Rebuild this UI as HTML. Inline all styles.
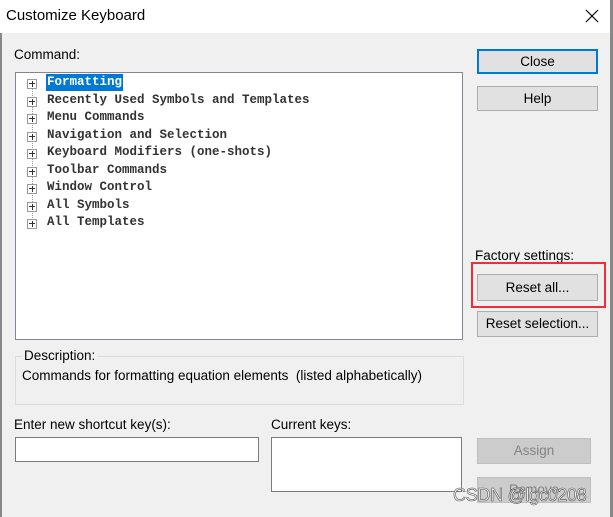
<!DOCTYPE html>
<html><head><style>
*{margin:0;padding:0;box-sizing:border-box}
body{width:613px;height:517px;background:#f0f0f0;position:relative;overflow:hidden;font-family:"Liberation Sans",sans-serif;font-size:13.5px;color:#000}
.a{position:absolute}
.title{left:0;top:0;width:613px;height:33px;background:#fff}
.btn{position:absolute;background:#e1e1e1;border:1px solid #adadad;text-align:center;font-size:13.5px}
.lbl{position:absolute;font-size:13.5px;white-space:nowrap}
.tree div{position:absolute;left:0;height:17px;font-family:"Liberation Mono",monospace;font-size:12.5px;font-weight:bold;color:#333;white-space:nowrap;line-height:17px}
.pl{position:absolute;width:10px;height:10px;border:1px solid #999;background:#fff}
.pl:before{content:"";position:absolute;left:1px;top:3px;width:6px;height:1px;background:#333}
.pl:after{content:"";position:absolute;left:3.5px;top:0.5px;width:1px;height:6px;background:#333}
</style></head><body>
<div class="a title"></div>
<div class="a" style="left:0;top:33px;width:2px;height:484px;background:#888"></div>
<div class="a" style="left:610px;top:0;width:3px;height:517px;background:#888"></div>
<div class="lbl" style="left:6px;top:7px;font-size:15px">Customize Keyboard</div>
<svg class="a" style="left:585px;top:9px" width="14" height="14"><path d="M1 1L13 13M13 1L1 13" stroke="#000" stroke-width="1.2"/></svg>
<div class="lbl" style="left:14px;top:47px">Command:</div>
<div class="a" style="left:15px;top:72px;width:448px;height:268px;background:#fff;border:1px solid #828790"></div>
<div class="a" style="left:32px;top:88px;width:0;height:140px;border-left:1px dotted #999"></div>
<div class="tree a" style="left:0;top:0">
<div style="top:74px;left:46px;background:#0078d7;color:#fff;padding:0 1px">Formatting</div>
<div style="top:92px;left:47px">Recently Used Symbols and Templates</div>
<div style="top:109px;left:47px">Menu Commands</div>
<div style="top:127px;left:47px">Navigation and Selection</div>
<div style="top:144px;left:47px">Keyboard Modifiers (one-shots)</div>
<div style="top:162px;left:47px">Toolbar Commands</div>
<div style="top:179px;left:47px">Window Control</div>
<div style="top:197px;left:47px">All Symbols</div>
<div style="top:214px;left:47px">All Templates</div>
</div>
<div class="pl" style="left:27px;top:79px"></div>
<div class="pl" style="left:27px;top:97px"></div>
<div class="pl" style="left:27px;top:114px"></div>
<div class="pl" style="left:27px;top:132px"></div>
<div class="pl" style="left:27px;top:149px"></div>
<div class="pl" style="left:27px;top:167px"></div>
<div class="pl" style="left:27px;top:184px"></div>
<div class="pl" style="left:27px;top:202px"></div>
<div class="pl" style="left:27px;top:219px"></div>
<div class="btn" style="left:477px;top:49px;width:121px;height:25px;border:2px solid #0078d7;line-height:21px">Close</div>
<div class="btn" style="left:477px;top:86px;width:121px;height:25px;line-height:23px">Help</div>
<div class="lbl" style="left:475px;top:248px">Factory settings:</div>
<div class="a" style="left:471px;top:262px;width:135px;height:46px;border:2px solid #f03030"></div>
<div class="btn" style="left:477px;top:274px;width:121px;height:27px;line-height:25px">Reset all...</div>
<div class="btn" style="left:477px;top:311px;width:121px;height:26px;line-height:24px">Reset selection...</div>
<div class="a" style="left:15px;top:356px;width:449px;height:49px;border:1px solid #dcdcdc"></div>
<div class="lbl" style="left:22px;top:348px;background:#f0f0f0;padding:0 2px">Description:</div>
<div class="lbl" style="left:22px;top:368px">Commands for formatting equation elements&nbsp; (listed alphabetically)</div>
<div class="lbl" style="left:14px;top:417px">Enter new shortcut key(s):</div>
<div class="a" style="left:15px;top:437px;width:244px;height:25px;background:#fff;border:1px solid #7a7a7a"></div>
<div class="lbl" style="left:271px;top:417px">Current keys:</div>
<div class="a" style="left:271px;top:437px;width:191px;height:55px;background:#fff;border:1px solid #7a7a7a"></div>
<div class="btn" style="left:477px;top:438px;width:114px;height:26px;line-height:24px;background:#ccc;border-color:#bfbfbf;color:#838383">Assign</div>
<div class="btn" style="left:477px;top:477px;width:114px;height:26px;line-height:24px;background:#ccc;border-color:#bfbfbf;color:#838383">Remove</div>
<div class="lbl" style="left:453px;top:485px;font-size:18px;letter-spacing:-0.3px;color:#f4f4f4;-webkit-text-stroke:0.6px #555">CSDN @lgc0208</div>
</body></html>
